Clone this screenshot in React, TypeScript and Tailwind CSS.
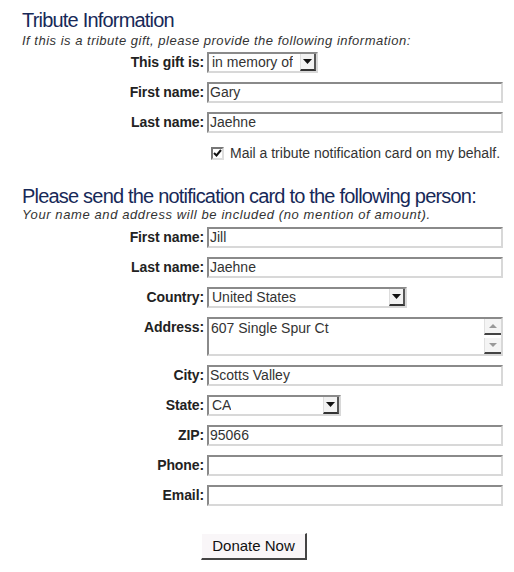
import React from 'react';

const inputBox =
  'h-[21px] border-2 border-t-[#8a8a8a] border-l-[#8a8a8a] border-b-[#d8d8d8] border-r-[#d8d8d8] bg-white px-[1px] text-[14px] leading-[17px] text-[#333] flex items-center';

function Row({ label, children, top = 'items-center' }: { label: string; children: React.ReactNode; top?: string }) {
  return (
    <div className={`flex ${top} gap-[3px]`}>
      <div className="w-[182px] text-right text-[14px] font-bold text-[#222] leading-[21px] tracking-[-0.1px]">{label}</div>
      {children}
    </div>
  );
}

function TextBox({ value = '' }: { value?: string }) {
  return <div className={`${inputBox} w-[296px]`}>{value}</div>;
}

function DownArrow() {
  return (
    <svg width="9" height="5" viewBox="0 0 9 5">
      <path d="M0 0h9L4.5 5z" fill="#111" />
    </svg>
  );
}

function Select({ value, width }: { value: string; width: string }) {
  return (
    <div className={`${inputBox} ${width} pl-[3px] pr-0 justify-between`}>
      <span className="truncate">{value}</span>
      <span className="h-[17px] w-[16px] shrink-0 flex items-center justify-center bg-[#f2f2f2] border-r-2 border-b-2 border-r-[#555] border-b-[#333] border-l border-l-[#ddd]">
        <DownArrow />
      </span>
    </div>
  );
}

function AddressBox({ value }: { value: string }) {
  return (
    <div className="h-[39px] w-[296px] border-2 border-t-[#8a8a8a] border-l-[#8a8a8a] border-b-[#d8d8d8] border-r-[#d8d8d8] bg-white flex text-[14px] text-[#333]">
      <div className="flex-1 pl-[2px] leading-[18px]">{value}</div>
      <div className="w-[17px] flex flex-col justify-between bg-white">
        <span className="h-[16px] flex items-center justify-center bg-[#f4f4f4] border-b-2 border-b-[#444] border-l border-l-[#e0e0e0]">
          <svg width="8" height="4" viewBox="0 0 8 4">
            <path d="M0 4h8L4 0z" fill="#999" />
          </svg>
        </span>
        <span className="h-[16px] flex items-center justify-center bg-[#f4f4f4] border-b-2 border-b-[#444] border-l border-l-[#e0e0e0]">
          <svg width="8" height="4" viewBox="0 0 8 4">
            <path d="M0 0h8L4 4z" fill="#999" />
          </svg>
        </span>
      </div>
    </div>
  );
}

export default function App() {
  return (
    <div className="w-[514px] h-[572px] bg-white pl-[22px] pt-[9px] font-['Liberation_Sans',Arial,sans-serif]">
      <h2 className="text-[20px] leading-[22px] tracking-[-0.8px] text-[#172958]">Tribute Information</h2>
      <p className="pt-[2px] text-[13px] leading-[16px] italic text-[#333] tracking-[0.5px]">
        If this is a tribute gift, please provide the following information:
      </p>

      <div className="mt-[3px] flex flex-col gap-[9px]">
        <Row label="This gift is:">
          <Select value="in memory of" width="w-[111px]" />
        </Row>
        <Row label="First name:">
          <TextBox value="Gary" />
        </Row>
        <Row label="Last name:">
          <TextBox value="Jaehne" />
        </Row>
      </div>

      <label className="mt-[12px] ml-[189px] flex items-center gap-[6px] text-[14px] text-[#333] leading-[16px]">
        <span className="w-[13px] h-[13px] border-2 border-t-[#777] border-l-[#777] border-b-[#ddd] border-r-[#ddd] bg-white flex items-center justify-center">
          <svg width="9" height="8" viewBox="0 0 9 8">
            <path d="M1 4l2.5 2.5L8 1" stroke="#111" strokeWidth="2" fill="none" />
          </svg>
        </span>
        Mail a tribute notification card on my behalf.
      </label>

      <h2 className="mt-[24px] text-[20px] leading-[22px] tracking-[-0.8px] text-[#172958]">
        Please send the notification card to the following person:
      </h2>
      <p className="text-[13px] leading-[16px] italic text-[#333] tracking-[0.6px]">
        Your name and address will be included (no mention of amount).
      </p>

      <div className="mt-[4px] flex flex-col gap-[9px]">
        <Row label="First name:">
          <TextBox value="Jill" />
        </Row>
        <Row label="Last name:">
          <TextBox value="Jaehne" />
        </Row>
        <Row label="Country:">
          <Select value="United States" width="w-[200px]" />
        </Row>
        <Row label="Address:" top="items-start">
          <AddressBox value="607 Single Spur Ct" />
        </Row>
        <Row label="City:">
          <TextBox value="Scotts Valley" />
        </Row>
        <Row label="State:">
          <Select value="CA" width="w-[134px]" />
        </Row>
        <Row label="ZIP:">
          <TextBox value="95066" />
        </Row>
        <Row label="Phone:">
          <TextBox />
        </Row>
        <Row label="Email:">
          <TextBox />
        </Row>
      </div>

      <button
        type="button"
        className="mt-[27px] ml-[179px] h-[27px] w-[106px] bg-[#f9f6f8] border-t border-l border-t-white border-l-white border-r-2 border-b-2 border-r-[#444] border-b-[#444] text-[15px] text-[#111]"
      >
        Donate Now
      </button>
    </div>
  );
}
